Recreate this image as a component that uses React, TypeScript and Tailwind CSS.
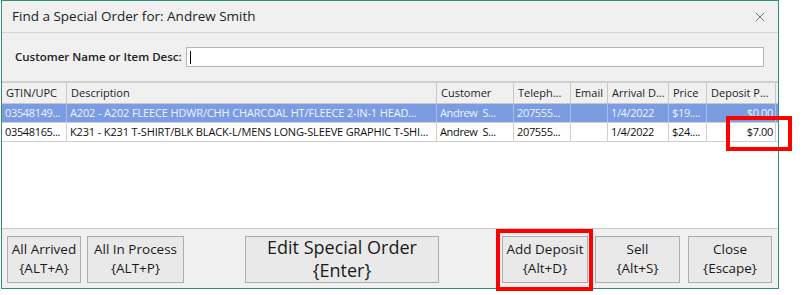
import { X } from 'lucide-react';

const cols = [
    { label: 'GTIN/UPC', w: 'w-[65px]' },
    { label: 'Description', w: 'w-[370px]' },
    { label: 'Customer', w: 'w-[77px]' },
    { label: 'Teleph...', w: 'w-[57px]' },
    { label: 'Email', w: 'w-[37px]' },
    { label: 'Arrival D...', w: 'w-[61px]' },
    { label: 'Price', w: 'w-[38px]' },
    { label: 'Deposit P...', w: 'w-[69px]' },
];

const rows = [
    ['03548149...', 'A202 - A202 FLEECE HDWR/CHH CHARCOAL HT/FLEECE 2-IN-1 HEAD...', 'Andrew  S...', '207555...', '', '1/4/2022', '$19....', '$0.00'],
    ['03548165...', 'K231 - K231 T-SHIRT/BLK BLACK-L/MENS LONG-SLEEVE GRAPHIC T-SHI...', 'Andrew  S...', '207555...', '', '1/4/2022', '$24....', '$7.00'],
];

function Btn({ top, bottom, className }: { top: string; bottom: string; className: string }) {
    return (
        <div className={`h-[47px] border border-[#adadad] bg-[#e9e9e9] flex flex-col items-center justify-center text-[#1a1a1a] ${className}`}>
            <span>{top}</span>
            <span>{bottom}</span>
        </div>
    );
}

export default function App() {
    return (
        <div className="relative w-[802px] h-[295px] bg-white" style={{ fontFamily: '"Open Sans", "Noto Sans", sans-serif' }}>
            <div className="ml-[1px] w-[778px] h-[289px] border border-[#2f8f74] bg-[#f0f0f0] flex flex-col">
                {/* title bar */}
                <div className="h-[32px] flex items-center justify-between pl-[10px] pr-[10px] border-b border-[#d4d4d4]">
                    <span className="text-[13.5px] text-[#222]">Find a Special Order for: Andrew Smith</span>
                    <X size={16} strokeWidth={1.2} className="text-[#555]" />
                </div>
                {/* search */}
                <div className="h-[50px] flex items-center pl-[13px] pr-[14px] gap-[4px] border-b-2 border-[#d0d0d0]">
                    <span className="text-[11.5px] font-semibold text-[#222] whitespace-nowrap">Customer Name or Item Desc:</span>
                    <div className="flex-1 h-[20px] bg-white border border-[#b5b5b5] flex items-center pl-[3px]">
                        <div className="w-[1px] h-[13px] bg-black" />
                    </div>
                </div>
                {/* grid */}
                <div className="h-[146px] bg-white border-b border-[#c8c8c8] text-[11px]">
                    <div className="flex h-[21px] bg-[#f0f0f0] border-b border-[#c8c8c8]">
                        {cols.map((c) => (
                            <div key={c.label} className={`${c.w} shrink-0 border-r border-[#c8c8c8] pl-[4px] flex items-center text-[#222] whitespace-nowrap overflow-hidden`}>
                                {c.label}
                            </div>
                        ))}
                    </div>
                    {rows.map((r, i) => (
                        <div key={i} className={`flex h-[19px] border-b border-[#d0d0d0] ${i === 0 ? 'bg-[#7b9ce0] text-[#eef2ff]' : 'bg-white text-[#111]'}`}>
                            {r.map((cell, j) => (
                                <div key={j} className={`${cols[j].w} shrink-0 border-r ${i === 0 ? 'border-[#a9bdea]' : 'border-[#d0d0d0]'} pl-[3px] pr-[2px] flex items-center whitespace-pre overflow-hidden ${j === 1 ? 'tracking-[-0.15px]' : 'tracking-[-0.35px]'} ${j === 7 ? 'justify-end' : ''}`}>
                                    {cell}
                                </div>
                            ))}
                        </div>
                    ))}
                </div>
                {/* buttons */}
                <div className="flex-1 flex items-center px-[5px] pt-[1px] text-[13.5px] leading-[19px]">
                    <Btn top="All Arrived" bottom="{ALT+A}" className="w-[74px]" />
                    <Btn top="All In Process" bottom="{ALT+P}" className="w-[97px] ml-[6px]" />
                    <Btn top="Edit Special Order" bottom="{Enter}" className="w-[194px] ml-[61px] text-[18px] leading-[23px]" />
                    <Btn top="Add Deposit" bottom="{Alt+D}" className="w-[86px] ml-[63px]" />
                    <Btn top="Sell" bottom="{Alt+S}" className="w-[85px] ml-[7px]" />
                    <Btn top="Close" bottom="{Escape}" className="w-[84px] ml-[8px]" />
                </div>
            </div>
            {/* annotation boxes */}
            <div className="absolute left-[726px] top-[116px] w-[66px] h-[35px] border-[4px] border-[#ff0000]" />
            <div className="absolute left-[496px] top-[229px] w-[97px] h-[62px] border-[4px] border-[#ff0000]" />
        </div>
    );
}
